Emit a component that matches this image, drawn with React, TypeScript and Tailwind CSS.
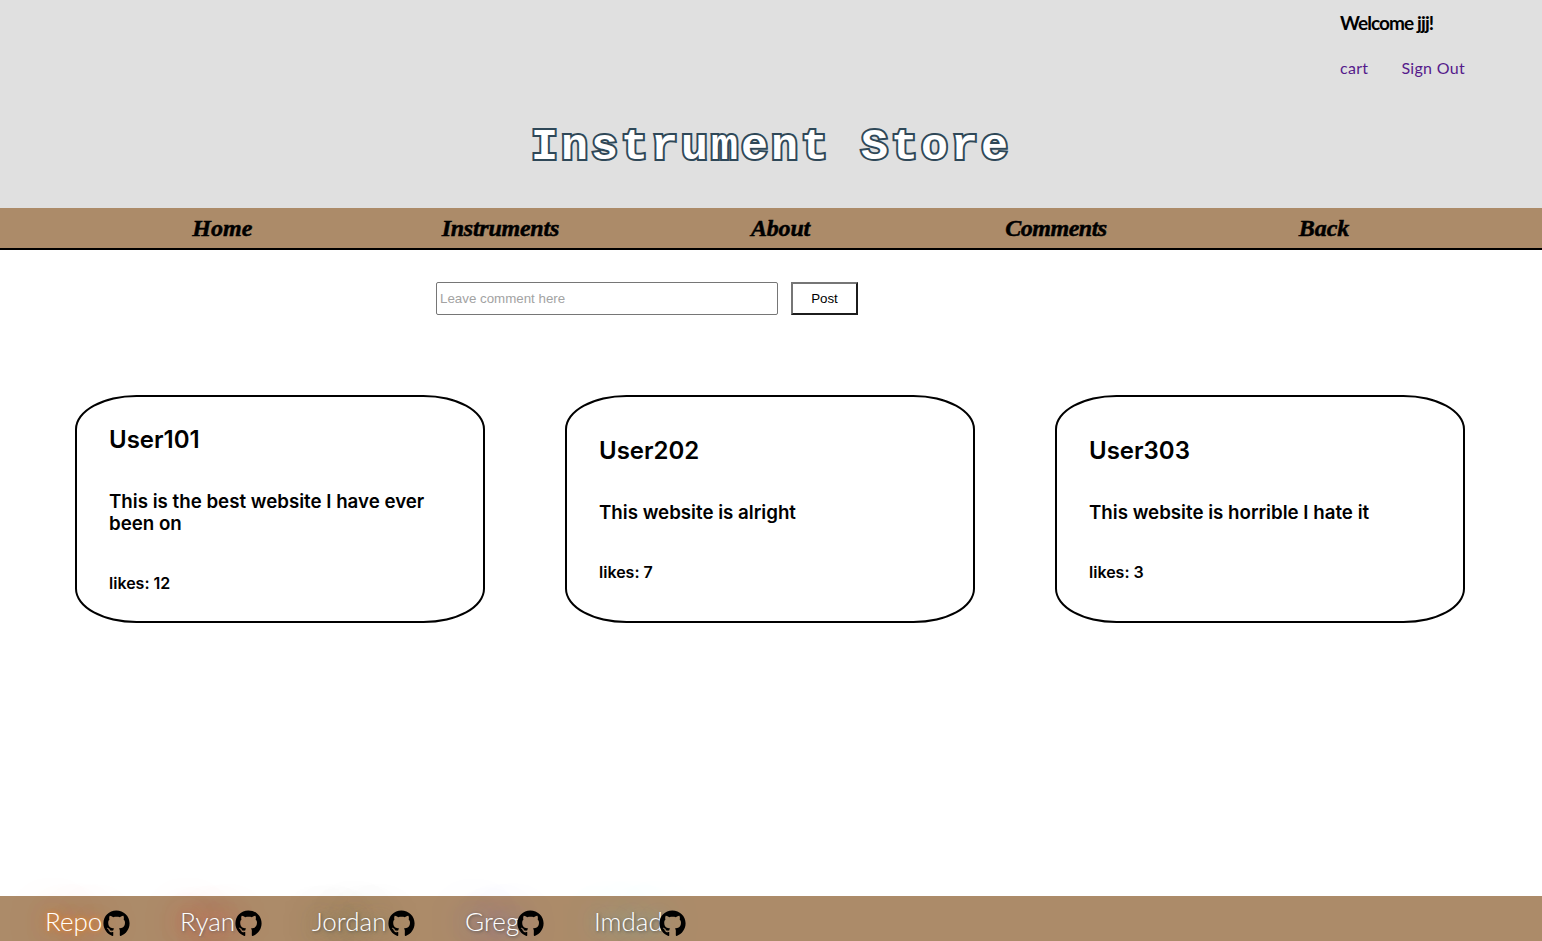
import { FaGithub } from "react-icons/fa";

const navItems = [
  { label: "Home", style: "w-[57px] tracking-[0px]" },
  { label: "Instruments", style: "w-[117px] tracking-[-0.25px]" },
  { label: "About", style: "w-[62px] tracking-[-0.2px]" },
  { label: "Comments", style: "w-[101px] tracking-[-0.5px]" },
  { label: "Back", style: "w-[51px] tracking-[0px]" },
];

const comments = [
  { user: "User101", text: "This is the best website I have ever been on", likes: 12 },
  { user: "User202", text: "This website is alright", likes: 7 },
  { user: "User303", text: "This website is horrible I hate it", likes: 3 },
];

const links = [
  { label: "Repo", style: "w-[58px] [text-shadow:0_0_4px_#ff8c1a,0_0_14px_#d9702a,0_0_38px_#ff5a3c]" },
  { label: "Ryan", style: "w-[55px] [text-shadow:1px_1px_3px_#666,0_0_20px_#e05045,0_0_38px_#ff3c3c]" },
  { label: "Jordan", style: "w-[76px] [text-shadow:1px_1px_3px_#555,0_0_18px_#8c8b5c,0_0_38px_#4d6b4d]" },
  { label: "Greg", style: "w-[52px] [text-shadow:1px_1px_3px_#555,0_0_20px_#85789a,0_0_38px_#6666ee]" },
  { label: "Imdad", style: "w-[65px] [text-shadow:1px_1px_3px_#555,0_0_14px_#8b9e94,0_0_38px_#66dfee]" },
];

export default function App() {
  return (
    <div className="flex h-[941px] flex-col overflow-hidden bg-white font-['Inter',sans-serif] text-black">
      <header className="flex h-[208px] shrink-0 flex-col bg-[#e0e0e0]">
        <div className="ml-auto mr-[77px] flex h-[112px] w-[125px] flex-col pt-2 font-['Lato',sans-serif]">
          <p className="h-[30px] whitespace-nowrap text-[19px] font-bold leading-[30px] tracking-[-0.9px]">Welcome jjj!</p>
          <div className="mt-[18px] flex justify-between text-base leading-6 text-[#551a8b]">
            <a className="tracking-[0.3px]">cart</a>
            <a className="whitespace-nowrap tracking-[0.3px]">Sign Out</a>
          </div>
        </div>
        <h1 className="ml-[531px] whitespace-pre font-['Liberation_Mono',monospace] text-[45px] font-bold leading-[72px] tracking-[3px] text-white [-webkit-text-stroke:4px_#2f4858] [paint-order:stroke_fill]">
          Instrument Store
        </h1>
      </header>
      <nav className="flex h-[42px] shrink-0 items-center justify-evenly border-b-2 border-black bg-[#ac8b69] font-['Liberation_Serif',serif] text-2xl font-bold italic [-webkit-text-stroke:0.5px_black]">
        {navItems.map((n) => (
          <a key={n.label} className={`whitespace-nowrap ${n.style}`}>{n.label}</a>
        ))}
      </nav>
      <main className="flex-1">
        <form className="ml-[436px] mt-8 flex h-[33px] gap-[13px] font-['Liberation_Sans',sans-serif] text-[13.33px]">
          <input
            placeholder="Leave comment here"
            className="w-[342px] rounded-[2px] border border-[#767676] px-[3px] placeholder:text-[#a3a3a3]"
          />
          <button type="button" className="w-[67px] border-2 border-b-[#1c1c1c] border-l-[#767676] border-r-[#1c1c1c] border-t-[#767676]">
            Post
          </button>
        </form>
        <section className="mt-20 flex gap-20 px-[75px]">
          {comments.map((c) => (
            <article key={c.user} className="flex h-[228px] w-[410px] flex-col justify-center rounded-[15%] border-2 border-black px-8 font-semibold">
              <h2 className="text-2xl leading-[29px]">{c.user}</h2>
              <h3 className="mt-[37px] text-[18.72px] leading-[22px]">{c.text}</h3>
              <h4 className="mt-[39px] text-base leading-[19px]">likes: {c.likes}</h4>
            </article>
          ))}
        </section>
      </main>
      <footer className="flex h-[45px] shrink-0 gap-[50px] bg-[#ac8b69] pl-[45px] font-['Lato',sans-serif] text-[26px] font-light text-white">
        {links.map((l) => (
          <a key={l.label} className="flex pt-1">
            <span className={`whitespace-nowrap leading-[42px] ${l.style}`}>{l.label}</span>
            <FaGithub className="mt-2.5 size-[27px] text-black" />
          </a>
        ))}
      </footer>
    </div>
  );
}
